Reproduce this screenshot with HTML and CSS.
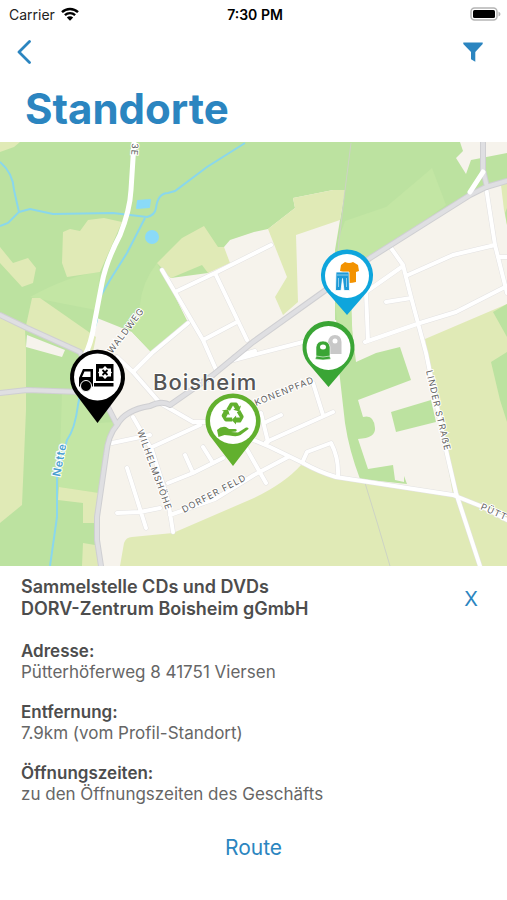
FILE: index.html
```html
<!DOCTYPE html>
<html lang="de">
<head>
    <meta charset="UTF-8">
    <meta name="viewport" content="width=device-width, initial-scale=1.0">
    <title>Standorte</title>
    <link rel="stylesheet" href="styles.css">
</head>
<body>
    <!-- Status bar -->
    <div class="status-bar">
        <div class="carrier">
            <span>Carrier</span>
            <svg class="wifi" viewBox="0 0 18 14">
                <path d="M1 5.2a11.5 11.5 0 0 1 16 0M3.9 8.2a7.4 7.4 0 0 1 10.2 0" fill="none" stroke="#000" stroke-width="2.4"/>
                <path d="M9 13.8L5.8 10.6a4.6 4.6 0 0 1 6.4 0z"/>
            </svg>
        </div>
        <div class="time">7:30 PM</div>
        <svg class="battery" viewBox="0 0 31 14">
            <rect x="1" y="1" width="26" height="12" rx="3.5" fill="#fff" stroke="#b5b5b5" stroke-width="1.5"/>
            <rect x="3" y="3" width="22" height="8" rx="1.5"/>
            <path d="M28.5 4.5q2 1 2 2.5t-2 2.5z" fill="#b5b5b5"/>
        </svg>
    </div>

    <!-- Header -->
    <header class="header">
        <div class="nav">
            <a class="icon-button" href="#" aria-label="Zurück">
                <svg class="back-icon" viewBox="0 0 14 24"><path d="M12.5 1.5L2 12l10.5 10.5" fill="none" stroke="currentColor" stroke-width="2.8" stroke-linecap="round" stroke-linejoin="round"/></svg>
            </a>
            <button class="icon-button" type="button" aria-label="Filter">
                <svg class="filter-icon" viewBox="0 0 20 20"><path d="M.3.5h19.4v1.4L12.3 10v9.7L8 17.2V10L.3 1.9z" fill="currentColor"/></svg>
            </button>
        </div>
        <h1 class="title">Standorte</h1>
    </header>

    <!-- Map -->
    <main class="map">
        <svg class="map-canvas" viewBox="0 142 507 424">
            <rect class="town" x="0" y="142" width="507" height="424"/>

            <g class="forest">
                <path d="M0 142H460L463 151L456 158L466 174L471 160L507 153V181L484 187L470 194L370 260L351 272V320L335 320V250L340 220L345 190L333 190L293 198L295 208L268 229L254 232L230 240L224 247L208 273L171 278L161 268L188 323L152 353L132 332L97 318L90 353L115 422L108 443L103 477L95 523V545L99 566H0Z"/>
                <path d="M335 300H351L352 330L356 362L376 353L400 347L411 380L358 400L363 417Q374 414 375 428Q376 438 358 439L368 469L393 465L395 480L404 482V476L407 484L360 479Q349 450 345 423L339 370Z"/>
                <path d="M391 412L431 400L436 422L396 432Z"/>
            </g>
            <g class="meadow">
                <path d="M338 240L345 221L386 207L418 180L432 168L446 205L370 260L348 266H338Z"/>
                <path d="M157 263L188 323L152 353L132 332L140 305Q142 282 157 263Z"/>
                <path d="M30 297Q70 275 100 272L96 310L60 303ZM62 392H78L98 423L115 422L108 443L99 493L59 487Z"/>
                <path d="M335 304H351L353 345H341Z"/>
            </g>
            <g class="field">
                <path d="M0 142H20L14 147L0 152Z"/>
                <path d="M63 232L70 229L80 231L88 220L104 218L122 222L100 272L67 277L62 263Z"/>
                <path d="M0 247L13 263L28 258L36 268L33 283L22 287L0 263Z"/>
                <path d="M32 298L40 298L96 337L92 357L25 330Z"/>
                <path d="M0 315L25 330L26 350V410L22 505L0 523Z"/>
                <path d="M59 487L99 493L95 523H83V503L58 500ZM83 543L95 545L99 566H82Z"/>
                <path d="M157 263L182 238L204 226L218 247L224 247L230 263L208 273L202 265L171 278Z"/>
                <path d="M268 229L295 208L293 198L333 190H345L340 220L296 235L298 302L283 315L275 297L287 277Z"/>
                <path d="M120 566L124 543Q126 537 132 537L173 533L254 498Q285 483 301 465L336 477L453 495L425 339L507 304V566Z"/>
                <path d="M501 185L507 182V225L504 210Z"/>
            </g>
            <path class="town" d="M27 335L65 350L62 357L26 347Z"/>
            <g class="forest">
                <path d="M491 362L507 352V422L500 400ZM493 312L507 304V337ZM505 213L507 208V225Z"/>
            </g>

            <g class="water">
                <path d="M0 162Q13 173 14 190L19 212L8 223L0 226M19 212L30 209L53 214L113 213L147 217Q155 215 156 208Q158 193 168 193L175 191L207 167L245 143"/>
                <path d="M145 218L127 253L110 280L100 297L97 307V320L91 340L78 405Q75 429 67 440L57 477V517L50 566"/>
                <path class="pond" d="M138 201L150 200L149 207L137 208Z"/>
                <circle class="pond" cx="152" cy="237" r="6"/>
            </g>
            <path class="track" d="M351 143L345 190L338 250M365 483L377 522L390 566"/>

            <!-- streets are drawn twice: casing first, surface on top -->
            <defs>
                <path id="streets" d="M391 248L403 265L411 297L426 353L446 450L456 493L480 566M486 187L495 245L507 293M408 275L453 255L495 245M403 266L366 292L368 341M365 342L420 323L456 312L507 286M386 302L411 298M498 257H507M230 361L303 342M162 270L203 340L217 372M175 292L215 273L271 245M215 273L247 340M203 340L237 322M188 323L152 353L133 372M117 357L133 372L160 403L193 422H207M112 443L150 435M152 447L200 425M133 417L152 450L168 500L173 532M127 468L146 528M117 513L140 512L160 508M168 483L193 473L223 458M185 455L193 473M203 447L213 463M170 515L215 499L254 475L288 457M230 430L270 447L303 463Q319 472 336 477L453 495L483 507L507 520M266 442L333 412M313 383L323 415M261 413L268 442M266 422L281 415M303 461L307 452L331 443Q339 458 338 477M245 446L266 483M234 357L255 351"/>
                <path id="roads" d="M507 181L486 187L470 195L370 258L323 292L253 342L213 375L170 405Q162 400 150 406Q125 410 117 425Q108 435 106 455L97 517V540L101 566M483 143V170L487 187M0 315L27 328L80 352L117 425M0 393L27 390L80 392"/>
                <path id="country-road" d="M134 143L131 190Q130 210 120 235Q106 262 102 283L94 325Q91 344 85 355M470 192L483 172"/>
            </defs>
            <use class="street-casing" href="#streets"/>
            <use class="street" href="#streets"/>
            <use class="road-casing" href="#roads"/>
            <use class="road" href="#roads"/>
            <use class="country" href="#country-road"/>

            <g class="labels">
                <text class="place" x="153" y="390">Boisheim</text>
                <text x="112" y="354" transform="rotate(-53 112 354)">WALDWEG</text>
                <text x="256" y="406" transform="rotate(-22 256 406)">KONENPFAD</text>
                <text x="137" y="431" transform="rotate(70 137 431)">WILHELMSHÖHE</text>
                <text x="184" y="513" transform="rotate(-28 184 513)">DORFER FELD</text>
                <text x="426" y="371" transform="rotate(77 426 371)">LINDER STRAẞE</text>
                <text x="480" y="509" transform="rotate(24 480 509)">PÜTT</text>
                <text x="132" y="143" transform="rotate(94 132 143)">3E</text>
                <text class="river" x="60" y="477" transform="rotate(-79 60 477)">Nette</text>
            </g>

            <!-- Pins -->
            <a href="#" aria-label="Altkleider">
                <path fill="#0ea5dc" d="M347 315L327 292A26 26 0 1 1 367 292Z"/>
                <circle cx="347" cy="276" r="22" fill="#fff"/>
                <path fill="#f39200" d="M345 262q4 2 8 0l5 3 1 6-3 1v10q-7 2-13 0v-10l-3-1 1-6z"/>
                <path fill="#1d9ad7" stroke="#fff" stroke-width=".8" d="M336 272h13l.5 18.500H344l-1.500-12-1.500 12h-5.500z"/>
                <path d="M337 275h11M338.500 278v9M346.500 278v9" stroke="#bfe4f5" stroke-width=".7" fill="none"/>
            </a>
            <a href="#" aria-label="Glascontainer">
                <path fill="#3aa535" d="M328.500 387L308 363A26 26 0 1 1 349 363Z"/>
                <circle cx="328.500" cy="348" r="22" fill="#fff"/>
                <path fill="#c8c8c8" d="M328 354v-12q1-7 7-7t6.500 7v12z"/>
                <circle cx="335" cy="341" r="2.500" fill="#fff"/>
                <path fill="#3aa535" stroke="#fff" stroke-width=".6" d="M315 359l1-2v-10q1-6 7-6t7 6v10l1 2q-8 2-16 0z"/>
                <ellipse cx="323" cy="347" rx="3" ry="2.500" fill="#fff"/>
                <path d="M316 356q7 2 14 0" stroke="#fff" stroke-width=".6" fill="none"/>
            </a>
            <a href="#" aria-label="Schadstoffmobil">
                <path d="M97.500 423L75 393A27.500 27.500 0 1 1 120 393Z"/>
                <circle cx="97.500" cy="377" r="23.500" fill="#fff"/>
                <path d="M96 364h17.500v17H96zM94 383h19.500v3.500H94zM79 386v-8l4-9h10v17.500H79z"/>
                <path d="M82 377l2.500-5.500h6v5.500z" fill="#fff"/>
                <circle cx="86" cy="386" r="5.500" stroke="#fff"/>
                <path d="M105 366l2.500 2.500h3.500v3l1 1-1 1v3h-3.500L105 379l-2.500-2.500H99v-3l-1-1 1-1v-3h3.500z" fill="#fff"/>
                <path d="M102.500 370l5 5M107.500 370l-5 5" stroke="#000" stroke-width="1.800"/>
            </a>
            <a href="#" aria-label="Sammelstelle CDs und DVDs">
                <path fill="#62b02e" d="M233 466L210 436A27.500 27.500 0 1 1 256 436Z"/>
                <circle cx="233" cy="421" r="23" fill="#fff"/>
                <!-- one arrow, turned twice around the middle of the triangle -->
                <defs>
                    <path id="recycle-arrow" d="M226.500 409l3.200-5.600q.6-1 1.800-1h4.500q1 0 1.600 1l1.700 3 1.700-1-1.800 6-6-1.600 1.800-1-2-3.400-3 5.400z"/>
                </defs>
                <g fill="#62b02e">
                    <use href="#recycle-arrow"/>
                    <use href="#recycle-arrow" transform="rotate(120 233 413.500)"/>
                    <use href="#recycle-arrow" transform="rotate(240 233 413.500)"/>
                    <path d="M217 430q4-4 9-3l3 2h6q3 .5 1 2.500l-5 .5 7 .5 8-5q3-.5 2.500 1.500l-8 6q-3 2-11 .5l-5-.5-6 2z"/>
                </g>
            </a>
        </svg>
    </main>

    <!-- Location details -->
    <section class="details">
        <div class="details-head">
            <h2 class="name">Sammelstelle CDs und DVDs<br>DORV-Zentrum Boisheim gGmbH</h2>
            <button class="close" type="button" aria-label="Schließen">X</button>
        </div>
        <dl class="facts">
            <div class="fact">
                <dt>Adresse:</dt>
                <dd>Pütterhöferweg 8 41751 Viersen</dd>
            </div>
            <div class="fact">
                <dt>Entfernung:</dt>
                <dd>7.9km (vom Profil-Standort)</dd>
            </div>
            <div class="fact">
                <dt>Öffnungszeiten:</dt>
                <dd>zu den Öffnungszeiten des Geschäfts</dd>
            </div>
        </dl>
        <a class="route" href="#">Route</a>
    </section>
</body>
</html>
```
FILE: styles.css
```css
* {
    box-sizing: border-box;
}
body {
    font-family: Inter, Roboto, sans-serif;
    margin: 0;
    background-color: #fff;
    color: #4d4d4d;
}
button {
    font: inherit;
    border: 0;
    padding: 0;
    background: none;
    cursor: pointer;
}
a {
    text-decoration: none;
}
svg {
    display: block;
}
/* Status bar */
.status-bar {
    display: grid;
    grid-template-columns: 1fr auto 1fr;
    align-items: center;
    height: 28px;
    padding: 0 6px 0 9px;
    font-size: 14px;
    color: #222;
}
.carrier {
    display: flex;
    align-items: center;
    gap: 6px;
}
.wifi {
    width: 18px;
    height: 14px;
}
.time {
    font-weight: 600;
    color: #000;
}
.battery {
    width: 31px;
    height: 14px;
    justify-self: end;
}
/* Header */
.nav {
    display: flex;
    justify-content: space-between;
    align-items: center;
    height: 48px;
    padding: 0 24px 0 16px;
}
.icon-button {
    color: #2b85c0;
}
.back-icon {
    width: 16px;
    height: 24px;
}
.filter-icon {
    width: 20px;
    height: 20px;
}
.title {
    margin: 0;
    padding: 4px 25px 4px;
    font-size: 42px;
    line-height: 58px;
    font-weight: 700;
    color: #2b85c0;
}
/* Map */
.map-canvas {
    width: 100%;
}
.town {
    fill: #f6f3ec;
}
.forest {
    fill: #bce2a0;
}
.meadow {
    fill: #c3e6a4;
}
.field {
    fill: #e0eab6;
}
.water {
    fill: none;
    stroke: #8ad7ec;
    stroke-width: 2;
}
.pond {
    fill: #8adaf8;
    stroke: #8adaf8;
    stroke-linejoin: round;
}
.track {
    fill: none;
    stroke: #cdd3c4;
    stroke-width: 1;
}
.street-casing,
.street,
.road-casing,
.road,
.country {
    fill: none;
    stroke-linecap: round;
    stroke-linejoin: round;
}
.street-casing {
    stroke: #e3e2e2;
    stroke-width: 5;
}
.street {
    stroke: #fff;
    stroke-width: 4;
}
.road-casing {
    stroke: #cfcfd2;
    stroke-width: 6;
}
.road {
    stroke: #dfdfe2;
    stroke-width: 4;
}
.country {
    stroke: #fff;
    stroke-width: 5;
}
.labels {
    font-size: 9px;
    letter-spacing: 1px;
    fill: #5f5f5f;
    stroke: #fff;
    stroke-width: 2px;
    paint-order: stroke;
}
.place {
    font-size: 22px;
    font-weight: 500;
    fill: #555;
}
.river {
    font-size: 11px;
    font-weight: 600;
    fill: #4b9fd0;
}
/* Location details */
.details {
    display: flex;
    flex-direction: column;
    padding: 10px 21px 36px;
    font-size: 17px;
    line-height: 21px;
}
.details-head {
    display: flex;
    justify-content: space-between;
    align-items: center;
}
.name {
    margin: 0;
    font-size: 18px;
    line-height: 22px;
    font-weight: 600;
}
.close {
    padding: 2px 8px 0;
    font-size: 20px;
    color: #2b85c0;
}
.facts {
    display: flex;
    flex-direction: column;
    gap: 19px;
    margin: 21px 0 30px;
}
.facts dt {
    font-weight: 600;
}
.facts dd {
    margin: 0;
    color: #666;
}
.route {
    align-self: center;
    font-size: 21px;
    line-height: 26px;
    color: #2b85c0;
}
```
